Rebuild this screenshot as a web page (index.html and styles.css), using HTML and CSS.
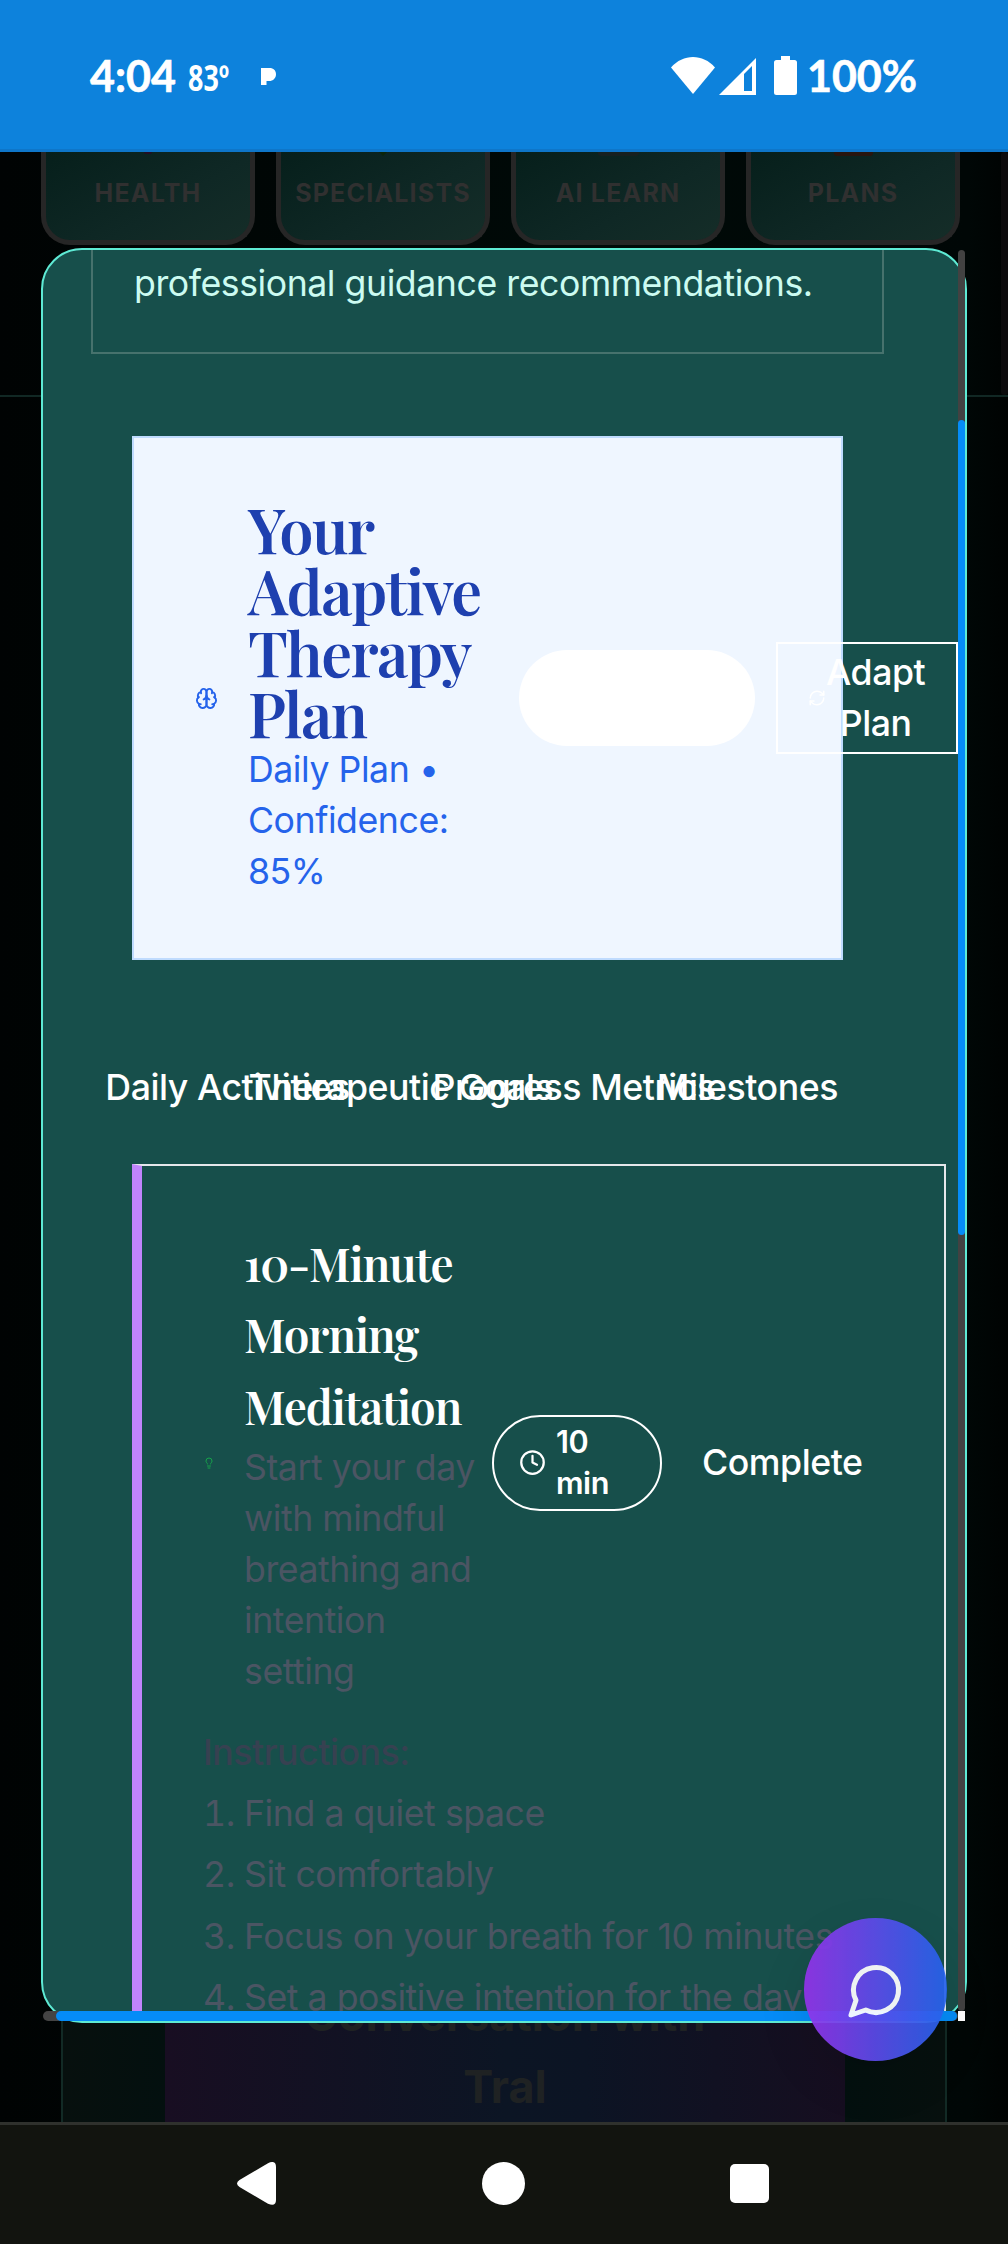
FILE: index.html
```html
<!DOCTYPE html>
<html lang="en">
<head>
<meta charset="utf-8">
<title>Adaptive Therapy Plan</title>
<link rel="stylesheet" href="styles.css">
</head>
<body>
<div class="phone">
  <header class="status-bar">
    <span class="clock">4:04</span>
    <span class="temp">83º</span>
    <svg class="pandora" width="15" height="17" viewBox="0 0 15 17"><path d="M0 0h8.500C12.500 0 15 2.400 15 6.200S12.200 13 8 13H5.500v4H0z" fill="#fff"/></svg>
    <div class="status-icons">
      <svg width="44" height="37" viewBox="0 0 44 37"><path d="M0 10.500C12-3.500 32-3.500 44 10.500L22 37z" fill="#fff"/></svg>
      <svg class="signal" width="37" height="37" viewBox="0 0 37 37"><path fill-rule="evenodd" d="M0 37L37 0v37zM25 16v17h8V8z" fill="#fff"/></svg>
      <svg class="battery" width="23" height="39" viewBox="0 0 23 39"><path d="M7 0h9v4h4.500Q23 4 23 6.500v30Q23 39 20.500 39h-18Q0 39 0 36.500v-30Q0 4 2.500 4H7z" fill="#fff"/></svg>
      <span class="clock">100%</span>
    </div>
  </header>

  <main class="viewport">
    <section class="categories">
      <div class="category"><i class="tip tip-health"></i><span>HEALTH</span></div>
      <div class="category"><i class="tip tip-specialists"></i><span>SPECIALISTS</span></div>
      <div class="category"><i class="tip tip-learn"></i><span>AI LEARN</span></div>
      <div class="category"><i class="tip tip-plans"></i><span>PLANS</span></div>
      <div class="rail"></div>
    </section>
    <section class="conversation">
      <h2>Conversation with Tral</h2>
    </section>

    <div class="dialog">
      <div class="dialog-content">
        <div class="notice">professional guidance recommendations.</div>

        <div class="plan-card">
          <svg class="brain" width="23" height="23" viewBox="0 0 24 24" fill="none" stroke="#2563eb" stroke-width="2" stroke-linecap="round" stroke-linejoin="round"><path d="M12 5a3 3 0 1 0-5.997.125 4 4 0 0 0-2.526 5.770 4 4 0 0 0 .556 6.588A4 4 0 1 0 12 18Z"/><path d="M12 5a3 3 0 1 1 5.997.125 4 4 0 0 1 2.526 5.770 4 4 0 0 1-.556 6.588A4 4 0 1 1 12 18Z"/><path d="M15 13a4.500 4.500 0 0 1-3-4 4.500 4.500 0 0 1-3 4"/><path d="M17.599 6.500a3 3 0 0 0 .399-1.375"/><path d="M6.003 5.125A3 3 0 0 0 6.401 6.500"/><path d="M3.477 10.896a4 4 0 0 1 .585-.396"/><path d="M19.938 10.500a4 4 0 0 1 .585.396"/><path d="M6 18a4 4 0 0 1-1.967-.516"/><path d="M19.967 17.484A4 4 0 0 1 18 18"/></svg>
          <div class="plan-text">
            <h2>Your Adaptive Therapy Plan</h2>
            <p>Daily Plan • Confidence: 85%</p>
          </div>
          <span class="plan-badge"></span>
          <button class="adapt">
            <svg width="18" height="18" viewBox="0 0 24 24" fill="none" stroke="#fff" stroke-width="2" stroke-linecap="round" stroke-linejoin="round"><path d="M3 12a9 9 0 0 1 9-9 9.750 9.750 0 0 1 6.740 2.740L21 8"/><path d="M21 3v5h-5"/><path d="M21 12a9 9 0 0 1-9 9 9.750 9.750 0 0 1-6.740-2.740L3 16"/><path d="M8 16H3v5"/></svg>
            <span>Adapt<br>Plan</span>
          </button>
        </div>

        <nav class="tabs">
          <span>Daily Activities</span>
          <span>Therapeutic Goals</span>
          <span>Progress Metrics</span>
          <span>Milestones</span>
        </nav>

        <article class="activity">
          <div class="activity-head">
            <svg width="12" height="12" viewBox="0 0 24 24" fill="none" stroke="#16a34a" stroke-width="2" stroke-linecap="round" stroke-linejoin="round"><path d="M15 14c.2-1 .7-1.700 1.500-2.500 1-.9 1.500-2.200 1.500-3.500A6 6 0 0 0 6 8c0 1 .2 2.200 1.500 3.500.7.7 1.300 1.500 1.500 2.500"/><path d="M9 18h6"/><path d="M10 22h4"/></svg>
            <div class="activity-text">
              <h3>10-Minute Morning Meditation</h3>
              <p>Start your day with mindful breathing and intention setting</p>
            </div>
            <span class="duration">
              <svg width="27" height="27" viewBox="0 0 24 24" fill="none" stroke="#fff" stroke-width="2" stroke-linecap="round" stroke-linejoin="round"><circle cx="12" cy="12" r="10"/><path d="M12 6v6l4 2"/></svg>
              <span>10<br>min</span>
            </span>
            <button class="complete">Complete</button>
          </div>
          <h4>Instructions:</h4>
          <ol>
            <li>Find a quiet space</li>
            <li>Sit comfortably</li>
            <li>Focus on your breath for 10 minutes</li>
            <li>Set a positive intention for the day</li>
          </ol>
        </article>
      </div>
      <div class="scroll-y"><div class="thumb-y"></div></div>
      <div class="scroll-x"><div class="thumb-x"></div></div>
      <div class="scroll-corner"></div>
    </div>

    <button class="chat" aria-label="Chat">
      <svg width="60" height="60" viewBox="0 0 24 24" fill="none" stroke="#fff" stroke-width="2" stroke-linecap="round" stroke-linejoin="round"><path d="M7.900 20A9 9 0 1 0 4 16.100L2 22Z"/></svg>
    </button>
  </main>

  <footer class="nav-bar">
    <svg width="39" height="43" viewBox="0 0 39 43"><path d="M31 1.200Q39-2.500 39 5v33q0 7-8 3.800L2.500 25q-5-3.500 0-7z" fill="#fff"/></svg>
    <svg width="43" height="43" viewBox="0 0 43 43"><circle cx="21.500" cy="21.500" r="21.500" fill="#fff"/></svg>
    <svg width="39" height="39" viewBox="0 0 39 39"><rect width="39" height="39" rx="5" fill="#fff"/></svg>
  </footer>
</div>
</body>
</html>
```
FILE: styles.css
```css
* { box-sizing: border-box; }
body { margin: 0; background: #000; }
h2, h3, h4, p, ol { margin: 0; }
svg { display: block; flex: none; }
button { font: inherit; letter-spacing: inherit; color: inherit; background: none; border: 0; padding: 0; }

.phone {
  width: 1008px;
  height: 2244px;
  display: flex;
  flex-direction: column;
  overflow: hidden;
  font-family: "Inter", "Liberation Sans", sans-serif;
  font-size: 35.7px;
  line-height: 51px;
}

/* system status bar */
.status-bar {
  flex: none;
  height: 152px;
  background: #0d82dc;
  border-bottom: 3px solid #0e76c9;
  display: flex;
  align-items: center;
  padding: 2px 91px 0 90px;
  color: #fff;
  font-family: "Lato", "Inter", sans-serif;
  font-weight: 700;
}
.clock { font-size: 43px; -webkit-text-stroke: .6px #fff; }
.temp {
  margin: 4px 0 0 12px;
  font-family: "Open Sans", sans-serif;
  font-size: 35px;
  transform: scaleX(.77);
  transform-origin: left;
  width: 62px;
}
.pandora { margin-left: 11px; margin-top: 2px; }
.status-icons { display: flex; align-items: center; margin-left: auto; }
.signal { margin: 1px 0 0 4px; }
.battery { margin: 0 10px 0 18px; }

/* page behind the dialog */
.viewport {
  flex: none;
  height: 1970px;
  position: relative;
  display: flex;
  flex-direction: column;
  justify-content: space-between;
  background: linear-gradient(90deg, #000303, #000a08 60%, #000706 96%, #000302);
}
.categories {
  height: 245px;
  border-bottom: 2px solid #112824;
  padding-left: 41px;
  display: flex;
  align-items: flex-start;
  gap: 21px;
}
.category {
  width: 214px;
  height: 93px;
  border: 5px solid #262626;
  border-top: 0;
  border-radius: 0 0 29px 29px;
  background: linear-gradient(150deg, #061f1b, #0f2825 60%, #152d28);
  display: flex;
  flex-direction: column;
  align-items: center;
  color: #303030;
  font-size: 25px;
  font-weight: 700;
  letter-spacing: 1.2px;
  line-height: 30px;
}
.category span { margin-top: 22px; white-space: nowrap; }
.tip { height: 4px; }
.tip-health { width: 8px; background: #230d23; border-radius: 0 0 4px 4px; height: 2px; margin-bottom: 2px; }
.tip-specialists { width: 8px; background: #0b2408; clip-path: polygon(0 0, 100% 0, 50% 100%); }
.tip-learn { width: 41px; background: #17201f; border-radius: 0 0 3px 3px; }
.tip-plans { width: 39px; background: #28150e; border-radius: 0 0 3px 3px; }
.rail { width: 7px; height: 243px; margin-left: auto; background: #0c0b0c; border-radius: 3px; }
.conversation {
  height: 143px;
  margin: 0 61px;
  padding: 0 102px;
  border: 2px solid #122a25;
  border-width: 0 2px;
  background: linear-gradient(90deg, #07100e, #03100f 12%, #03100f 88%, #07100e);
}
.conversation h2 {
  height: 143px;
  margin-right: -2px;
  padding: 0 120px;
  background: linear-gradient(90deg, #180e22, #0c1524 50%, #0c1424 62%, #160e20);
  color: #1f2223;
  font-size: 45px;
  font-weight: 700;
  line-height: 72px;
  text-align: center;
}

/* dialog */
.dialog {
  position: absolute;
  left: 41px;
  top: 96px;
  width: 926px;
  height: 1775px;
  border: 2px solid #5eead4;
  border-radius: 41px;
  background: #174f4b;
  letter-spacing: -.46px;
  display: grid;
  grid-template-columns: 915px 7px;
  grid-template-rows: 1761px 10px;
}
.dialog-content { overflow: hidden; }
.scroll-y { background: #424242; border-radius: 4px; padding-top: 170px; }
.thumb-y { height: 815px; background: #058cf7; border-radius: 4px; }
.scroll-x { background: #444; border-radius: 5px; padding-left: 13px; }
.thumb-x { width: 901px; height: 10px; background: #058cf7; border-radius: 5px; }
.scroll-corner { background: #fff; }

.notice {
  width: 793px;
  height: 104px;
  margin-left: 48px;
  padding: 8px 0 0 41px;
  border: 2px solid #47726d;
  border-top: 0;
  color: #ccfbf1;
}

.plan-card {
  width: 711px;
  height: 524px;
  margin: 82px 0 0 89px;
  padding-left: 61px;
  border: 2px solid #bfdbfe;
  background: #eff6ff;
  display: flex;
  align-items: center;
}
.plan-text { flex: none; width: 241px; margin: 0 30px; }
.plan-text h2, .activity-text h3 {
  font-family: "Playfair Display", "Liberation Serif", serif;
  font-weight: 600;
  letter-spacing: -.025em;
}
.plan-text h2 {
  margin: -1px 0 1px;
  color: #1e40af;
  font-size: 61.2px;
  line-height: 61.2px;
}
.plan-text p { color: #2563eb; }
.plan-badge { flex: none; width: 236px; height: 96px; border-radius: 48px; background: #fff; }
.adapt {
  flex: none;
  width: 182px;
  height: 112px;
  margin-left: 21px;
  padding-left: 30px;
  border: 2px solid #fff;
  display: flex;
  align-items: center;
  color: #fff;
  font-weight: 500;
  text-align: center;
}

.tabs {
  width: 693px;
  margin: 102px 0 51px 98px;
  display: grid;
  grid-template-columns: repeat(4, 1fr);
  color: #fff;
  font-weight: 500;
}
.tabs span { justify-self: center; white-space: nowrap; margin: 0 -80px; }

.activity {
  width: 814px;
  height: 1000px;
  margin-left: 89px;
  padding: 62px 0 0 61px;
  border: 2px solid #e5e7eb;
  border-left: 10px solid #c084fc;
}
.activity-head { display: flex; align-items: center; color: #fff; }
.activity-text { flex: none; width: 240px; margin: 0 8px 0 29px; }
.activity-text h3 { font-size: 45.9px; line-height: 71.4px; }
.activity-text p { color: #4b5563; }
.duration {
  flex: none;
  width: 170px;
  height: 96px;
  padding-left: 25px;
  border: 2px solid #fff;
  border-radius: 48px;
  display: flex;
  align-items: center;
  gap: 10px;
  font-size: 30.6px;
  font-weight: 600;
  line-height: 40.8px;
}
.complete { margin-left: 40px; font-weight: 500; }
.activity h4 { margin: 30px 0 10px; color: #374151; font-size: 35.7px; font-weight: 500; }
.activity ol { padding-left: 41px; color: #4b5563; }
.activity li { margin-bottom: 10.2px; white-space: nowrap; }

/* floating chat button */
.chat {
  position: absolute;
  left: 804px;
  top: 1766px;
  width: 143px;
  height: 143px;
  border-radius: 50%;
  background: linear-gradient(90deg, #9333ea, #2563eb);
  opacity: .93;
  box-shadow: 0 20px 50px rgba(0, 0, 0, .1);
  display: flex;
  align-items: center;
  justify-content: center;
}

/* system navigation */
.nav-bar {
  flex: none;
  height: 122px;
  border-top: 3px solid #2f312d;
  background: #12140f;
  display: flex;
  align-items: center;
  justify-content: space-between;
  padding: 0 239px 2px 237px;
}
```
